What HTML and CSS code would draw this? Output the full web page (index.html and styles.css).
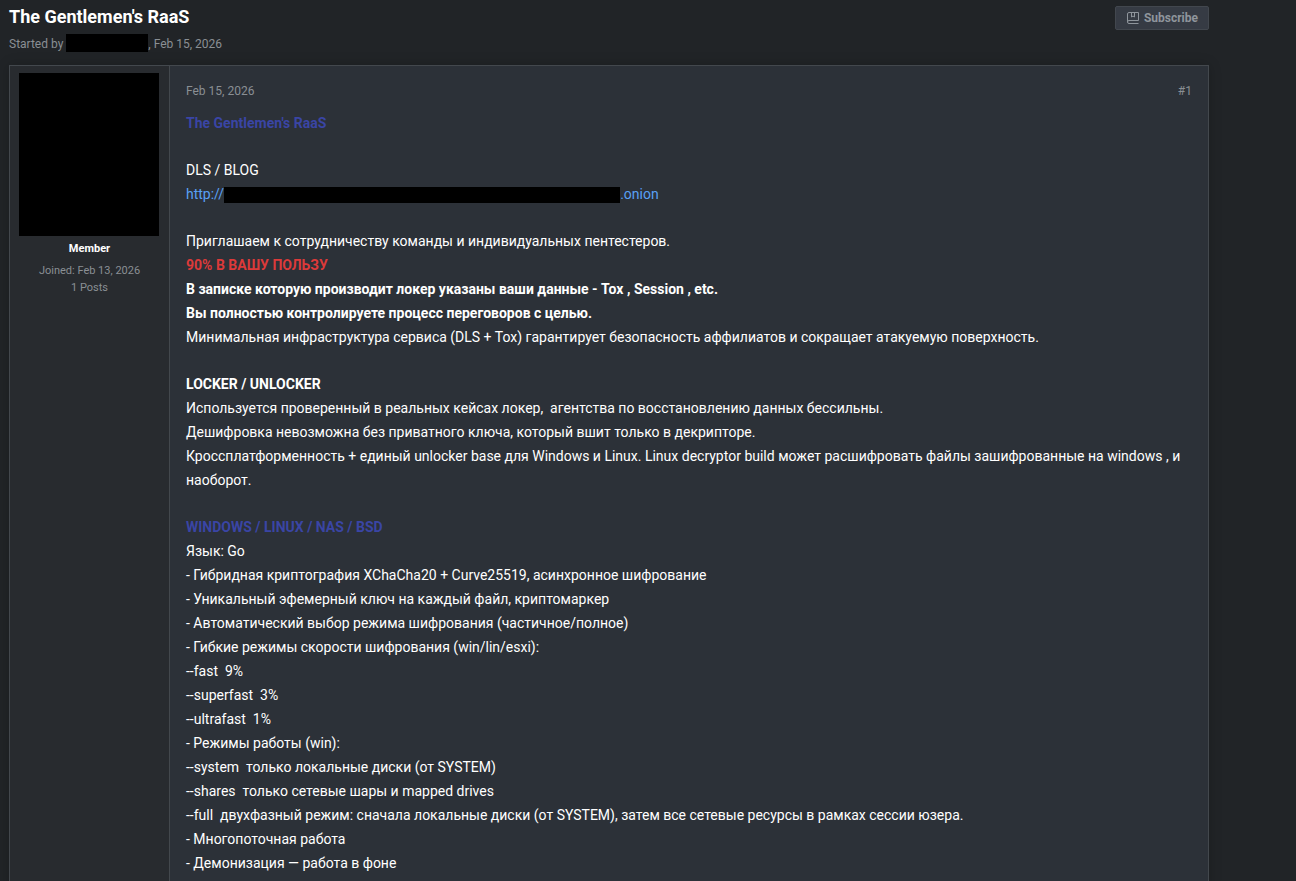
FILE: index.html
```html
<!doctype html>
<html lang="ru">
<head>
    <meta charset="UTF-8">
    <meta name="viewport" content="width=device-width, initial-scale=1.0">
    <title>The Gentlemen's RaaS</title>
    <link rel="stylesheet" href="styles.css">
</head>
<body>
<main class="container">
    <header class="thread-header">
        <div class="thread-header__info">
            <h1 class="thread-header__title">The Gentlemen's RaaS</h1>
            <p class="thread-header__meta">Started by <span class="redacted redacted--author"></span>, Feb 15, 2026</p>
        </div>
        <button class="btn" type="button">
            <svg class="btn__icon" viewBox="0 0 12 12" aria-hidden="true">
                <path d="M11.5 8.5V.5H2A1.5 1.5 0 0 0 .5 2v8A1.5 1.5 0 0 0 2 11.5h9.5M.5 10A1.5 1.5 0 0 1 2 8.500h9.500M4.500.5v4.500l1.500-1 1.500 1v-4.500"/>
            </svg>
            Subscribe
        </button>
    </header>
    <article class="post">
        <aside class="post__user">
            <div class="post__avatar"></div>
            <p class="post__rank">Member</p>
            <p class="post__stat">Joined: Feb 13, 2026</p>
            <p class="post__stat">1 Posts</p>
        </aside>
        <div class="post__body">
            <div class="post__head">
                <time datetime="2026-02-15">Feb 15, 2026</time>
                <a class="post__number" href="#1">#1</a>
            </div>
            <div class="post__content">
                <p><b class="accent">The Gentlemen's RaaS</b></p>
                <p>DLS / BLOG<br>
                    <a class="post__link" href="#">http://<span class="redacted redacted--link"></span>.onion</a></p>
                <p>Приглашаем к сотрудничеству команды и индивидуальных пентестеров.<br>
                    <b class="danger">90% В ВАШУ ПОЛЬЗУ</b><br>
                    <b>В записке которую производит локер указаны ваши данные - Tox , Session , etc.</b><br>
                    <b>Вы полностью контролируете процесс переговоров с целью.</b><br>
                    Минимальная инфраструктура сервиса (DLS + Tox) гарантирует безопасность аффилиатов и сокращает атакуемую поверхность.</p>
                <p><b>LOCKER / UNLOCKER</b><br>
                    Используется проверенный в реальных кейсах локер,&nbsp; агентства по восстановлению данных бессильны.<br>
                    Дешифровка невозможна без приватного ключа, который вшит только в декрипторе.<br>
                    Кроссплатформенность + единый unlocker base для Windows и Linux. Linux decryptor build может расшифровать файлы зашифрованные на windows , и наоборот.</p>
                <p><b class="accent">WINDOWS / LINUX / NAS / BSD</b><br>
                    Язык: Go<br>
                    - Гибридная криптография XChaCha20 + Curve25519, асинхронное шифрование<br>
                    - Уникальный эфемерный ключ на каждый файл, криптомаркер<br>
                    - Автоматический выбор режима шифрования (частичное/полное)<br>
                    - Гибкие режимы скорости шифрования (win/lin/esxi):<br>
                    --fast&nbsp; 9%<br>
                    --superfast&nbsp; 3%<br>
                    --ultrafast&nbsp; 1%<br>
                    - Режимы работы (win):<br>
                    --system&nbsp; только локальные диски (от SYSTEM)<br>
                    --shares&nbsp; только сетевые шары и mapped drives<br>
                    --full&nbsp; двухфазный режим: сначала локальные диски (от SYSTEM), затем все сетевые ресурсы в рамках сессии юзера.<br>
                    - Многопоточная работа<br>
                    - Демонизация — работа в фоне</p>
            </div>
        </div>
    </article>
</main>
</body>
</html>
```

FILE: styles.css
```css
* {
    box-sizing: border-box;
}

body {
    margin: 0;
    background: #212427;
    color: #ffffff;
    font-family: Roboto, "Liberation Sans", sans-serif;
    font-size: 14px;
    line-height: 24px;
}

h1,
p {
    margin: 0;
}

.container {
    display: flex;
    flex-direction: column;
    min-height: 100vh;
    max-width: 1218px;
    padding: 4px 9px 0;
}

.thread-header {
    display: flex;
    justify-content: space-between;
    align-items: flex-start;
    padding-bottom: 11px;
}

.thread-header__title {
    padding-bottom: 4px;
    font-size: 18px;
    font-weight: 700;
    line-height: 26px;
}

.thread-header__meta {
    color: #8a8f94;
    font-size: 12px;
    line-height: 20px;
}

.redacted {
    display: inline-block;
    background: #000000;
}

.redacted--author {
    width: 82px;
    height: 18px;
    vertical-align: top;
}

.redacted--link {
    width: 396px;
    height: 16px;
    vertical-align: middle;
}

.btn {
    display: flex;
    align-items: center;
    gap: 5px;
    height: 24px;
    margin-top: 2px;
    padding: 0 10px 0 11px;
    border: 1px solid #42474e;
    border-radius: 2px;
    background: #363b44;
    color: #8f959c;
    font-family: inherit;
    font-size: 12px;
    font-weight: 700;
    cursor: pointer;
}

.btn:hover {
    color: #ffffff;
}

.btn__icon {
    width: 12px;
    height: 12px;
    fill: none;
    stroke: currentColor;
}

.post {
    display: flex;
    flex: 1;
    border: 1px solid #43484d;
    border-bottom: 0;
    background: #2c3138;
    box-shadow: 0 0 12px rgba(0, 0, 0, 0.2);
}

.post__user {
    flex: 0 0 160px;
    padding: 7px 9px;
    border-right: 1px solid #43484d;
    background: #282b2f;
    text-align: center;
}

.post__avatar {
    width: 140px;
    height: 163px;
    margin-bottom: 1px;
    background: #000000;
}

.post__rank {
    padding-bottom: 1px;
    font-size: 11px;
    font-weight: 700;
}

.post__stat {
    color: #8a8f94;
    font-size: 11px;
    line-height: 17px;
}

.post__body {
    flex: 1;
    padding: 13px 16px;
}

.post__head {
    display: flex;
    justify-content: space-between;
    padding-bottom: 8px;
    color: #8a8f94;
    font-size: 12px;
}

.post__number {
    color: inherit;
    text-decoration: none;
}

.post__content {
    display: flex;
    flex-direction: column;
    gap: 23px;
}

.post__link {
    color: #59a0f5;
    text-decoration: none;
}

.accent {
    color: #3a45a5;
}

.danger {
    color: #dc3a3a;
}
```
